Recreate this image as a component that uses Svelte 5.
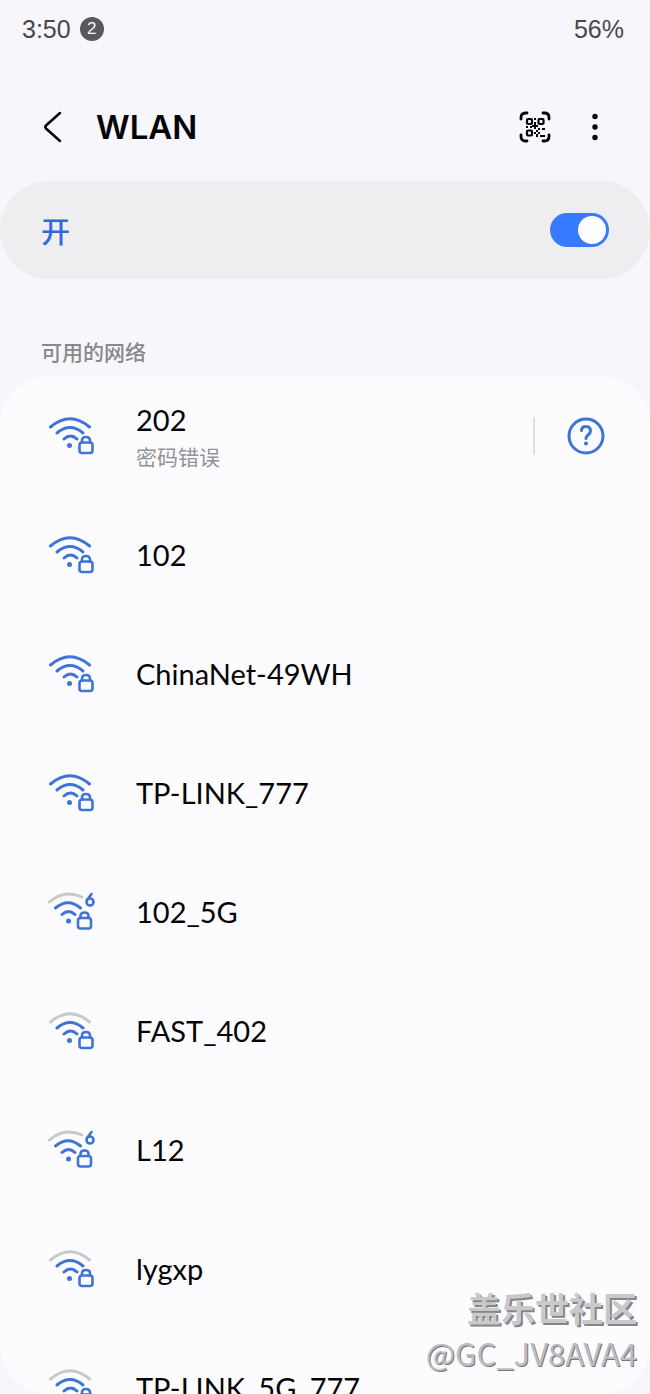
<script lang="ts">
  type Network = {
    name: string;
    note?: string;
    weak?: boolean;
    wifi6?: boolean;
  };

  const networks: Network[] = [
    { name: "202", note: "密码错误" },
    { name: "102" },
    { name: "ChinaNet-49WH" },
    { name: "TP-LINK_777" },
    { name: "102_5G", weak: true, wifi6: true },
    { name: "FAST_402", weak: true },
    { name: "L12", weak: true, wifi6: true },
    { name: "lygxp", weak: true },
    { name: "TP-LINK_5G_777", weak: true },
  ];

  let enabled = $state(true);
</script>

<div class="screen">
  <div class="status">
    <span>3:50</span>
    <span class="badge">2</span>
    <span class="battery">56%</span>
  </div>

  <header>
    <button type="button" class="back" aria-label="返回">
      <svg width="20" height="34" viewBox="0 0 20 34">
        <path d="M18 3 4 15.500q-1.500 1.500 0 3L18 31" />
      </svg>
    </button>
    <h1>WLAN</h1>
    <button type="button" class="qr" aria-label="扫描二维码">
      <svg width="32" height="32" viewBox="0 0 32 32">
        <path class="frame" d="M2 8V6.500Q2 2 6.500 2H8M24 2h1.500Q30 2 30 6.500V8M30 24v1.500q0 4.500-4.500 4.500H24M8 30H6.500Q2 30 2 25.500V24" />
        <g class="eyes">
          <rect x="8" y="8" width="5" height="5" rx="1" />
          <rect x="19.500" y="8" width="5" height="5" rx="1" />
          <rect x="8" y="19.500" width="5" height="5" rx="1" />
        </g>
        <path class="bits" d="M15 7h2v2h-2zM15 11h2v3h2v2h-2v2h-2v-2h-2v-2h2zM7 15h2v2H7zM11 15h2v2h-2zM19 17h2v2h-2zM23 17h3v2h-3zM17 19h2v2h-2zM15 21h2v2h-2zM19 21h2v2h-2zM17 23h2v3h-2zM21 24h5v2h-5z" />
      </svg>
    </button>
    <button type="button" class="more" aria-label="更多选项">
      <svg width="8" height="28" viewBox="0 0 8 28">
        <circle cx="4" cy="3.500" r="2.700" />
        <circle cx="4" cy="14" r="2.700" />
        <circle cx="4" cy="24.500" r="2.700" />
      </svg>
    </button>
  </header>

  <label class="switch">
    <span>开</span>
    <input type="checkbox" role="switch" bind:checked={enabled} />
  </label>

  <h2>可用的网络</h2>

  <ul>
    {#each networks as net}
      <li>
        <button type="button" class="net">
          <svg class="wifi" class:weak={net.weak} width="48" height="44" viewBox="0 0 48 44">
            {#if net.wifi6}
              <path class="outer" d="M1.500 12Q16-1 34 7" />
              <path d="M7.500 18Q20 7.500 32.500 18M14 24.500Q20.500 18.500 27 24.500" />
              <circle cx="20.500" cy="31" r="2.500" />
              <rect x="30" y="28" width="13" height="10.500" rx="2.500" />
              <path class="thin" d="M32.500 28v-2Q32.500 22.500 36.500 22.500T40.500 26v2" />
              <g class="six">
                <circle cx="42" cy="12" r="3.500" />
                <path d="M39 10 43.500 4" />
              </g>
            {:else}
              <path class="outer" d="M2.500 13Q22-3.500 41.500 13" />
              <path d="M9 19Q22 8 35 19M16 25Q22.500 19 29 25" />
              <circle cx="21.500" cy="31.500" r="2.500" />
              <rect x="31.500" y="28.500" width="13" height="10.500" rx="2.500" />
              <path class="thin" d="M34 28.500v-2Q34 23 38 23T42 26.500v2" />
            {/if}
          </svg>
          <span class="text" class:noted={net.note}>
            <span class="name">{net.name}</span>
            {#if net.note}
              <span class="note">{net.note}</span>
            {/if}
          </span>
        </button>
        {#if net.note}
          <button type="button" class="help" aria-label="帮助">
            <svg width="38" height="38" viewBox="0 0 38 38">
              <circle cx="19" cy="19" r="17" />
              <path d="M14.500 13.500Q14.500 9.500 19 9.500T23.500 14C23.500 18 19 17.500 19 21.500" />
              <circle class="dot" cx="19" cy="26.500" r="2" />
            </svg>
          </button>
        {/if}
      </li>
    {/each}
  </ul>

  <div class="mark">
    <strong>盖乐世社区</strong>
    <span>@GC_JV8AVA4</span>
  </div>
</div>

<style>
  :global(body) {
    background: #f6f6fb;
  }
  .screen {
    position: relative;
    display: flex;
    flex-direction: column;
    height: 100vh;
    overflow: hidden;
    color: #050507;
    font-family: Lato, "Noto Sans CJK SC", sans-serif;
  }
  button {
    padding: 0;
    border: none;
    background: none;
    color: inherit;
    font: inherit;
    text-align: left;
    cursor: pointer;
  }
  svg {
    display: block;
    flex: none;
    fill: none;
    stroke: currentColor;
    stroke-linecap: round;
    stroke-linejoin: round;
  }
  .status {
    display: flex;
    flex: none;
    align-items: center;
    height: 58px;
    padding: 0 26px 0 22px;
    color: #48484b;
    font-family: "Liberation Sans", sans-serif;
    font-size: 25px;
  }
  .badge {
    width: 24px;
    margin-left: 9px;
    border-radius: 50%;
    background: #59595b;
    color: #f6f6fb;
    font-size: 17px;
    line-height: 24px;
    text-align: center;
  }
  .battery {
    margin-left: auto;
  }
  header {
    display: flex;
    flex: none;
    align-items: center;
    height: 109px;
    padding: 14px 51px 0 42px;
  }
  .back svg {
    stroke-width: 2.500;
  }
  h1 {
    margin: 0 auto 0 34px;
    font-family: Inter, sans-serif;
    font-size: 33px;
    font-weight: 600;
  }
  .qr {
    margin-right: 40px;
  }
  .frame {
    stroke-width: 2.800;
  }
  .eyes {
    stroke-width: 2.200;
  }
  .bits,
  .more svg {
    fill: currentColor;
    stroke: none;
  }
  .switch {
    display: flex;
    flex: none;
    align-items: center;
    justify-content: space-between;
    height: 98px;
    padding: 0 41px;
    border-radius: 49px;
    background: #eeeef1;
    color: #3369d6;
    font-size: 29px;
    font-weight: 500;
  }
  .switch input {
    display: flex;
    align-items: center;
    width: 59px;
    height: 34px;
    margin: 0;
    padding: 0 3px;
    box-sizing: border-box;
    border-radius: 17px;
    background: #b5b5bb;
    appearance: none;
    cursor: pointer;
  }
  .switch input::before {
    content: "";
    width: 28px;
    height: 28px;
    border-radius: 50%;
    background: #fff;
  }
  .switch input:checked {
    justify-content: flex-end;
    background: #387aff;
  }
  h2 {
    flex: none;
    margin: 57px 0 9px 41px;
    color: #88888b;
    font-size: 21px;
    font-weight: 500;
    line-height: 31px;
  }
  ul {
    flex: 1;
    min-height: 0;
    margin: 0;
    padding: 0;
    overflow: hidden;
    border-radius: 48px;
    background: #fcfcff;
    list-style: none;
  }
  li {
    display: flex;
    align-items: center;
    height: 119px;
    padding: 0 45px 0 48px;
  }
  .net {
    display: flex;
    flex: 1;
    align-items: center;
    gap: 40px;
    height: 100%;
  }
  .wifi {
    color: #3e73d8;
    stroke-width: 3;
  }
  .wifi > circle {
    fill: currentColor;
    stroke: none;
  }
  .wifi rect,
  .thin,
  .six {
    stroke-width: 2.600;
  }
  .weak .outer {
    stroke: #c9c9c9;
  }
  .text {
    display: flex;
    flex-direction: column;
  }
  .noted {
    padding-top: 4px;
  }
  .name {
    font-size: 29px;
    line-height: 38px;
  }
  .note {
    color: #929297;
    font-size: 21px;
    line-height: 36px;
  }
  .help {
    padding-left: 32px;
    border-left: 2px solid #dedee1;
    color: #3e73d8;
  }
  .help svg {
    stroke-width: 3;
  }
  .help .dot {
    fill: currentColor;
    stroke: none;
  }
  .mark {
    position: absolute;
    right: 13px;
    bottom: 19px;
    display: flex;
    flex-direction: column;
    align-items: flex-end;
    color: #bdbdc0;
    font-family: "Noto Sans CJK SC", sans-serif;
    font-size: 31px;
    line-height: 45px;
    text-shadow: 1px 1px 0 #77777a;
    pointer-events: none;
  }
  .mark strong {
    color: #c9c9cb;
    font-size: 34px;
    text-shadow: 2px 2px 0 #858587;
  }
</style>
